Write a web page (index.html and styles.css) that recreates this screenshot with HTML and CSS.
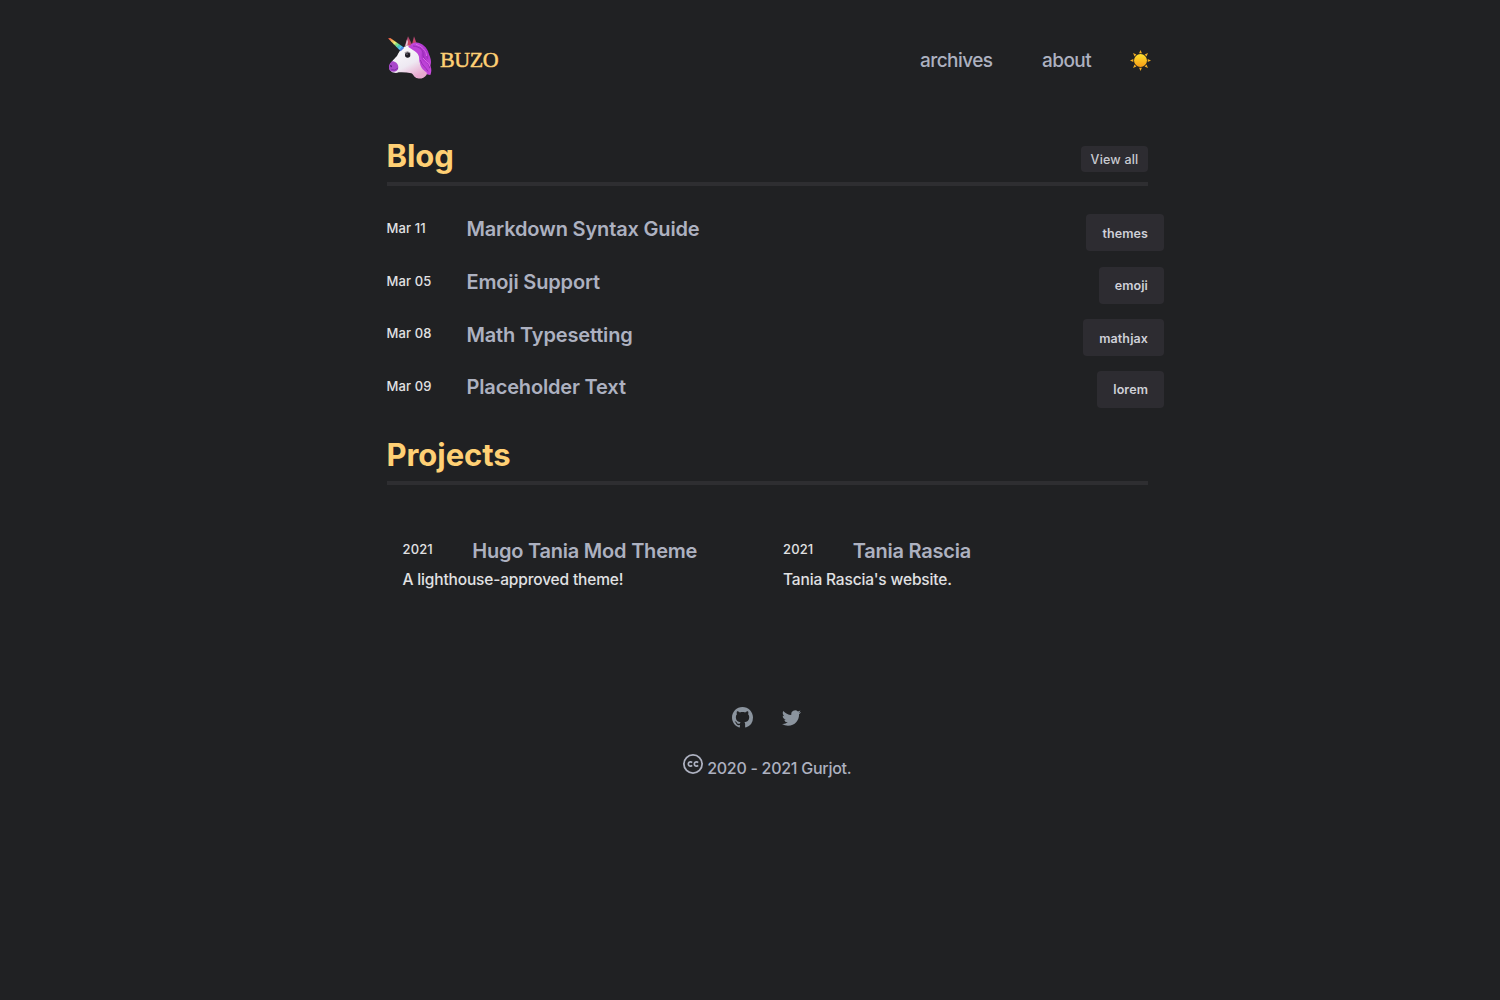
FILE: index.html
```html
<!DOCTYPE html>
<html lang="en">
<head>
<meta charset="utf-8">
<title>BUZO</title>
<link rel="stylesheet" href="styles.css">
</head>
<body>
<div class="page">
  <header class="header">
    <a class="logo">
      <svg class="unicorn" viewBox="0 0 156 150" aria-hidden="true">
        <defs>
          <linearGradient id="horn" x1="0" y1="0" x2="1" y2="1">
            <stop offset="0" stop-color="#e8474c"/><stop offset=".2" stop-color="#f3a14a"/><stop offset=".38" stop-color="#e9ec6a"/><stop offset=".55" stop-color="#58d68a"/><stop offset=".72" stop-color="#42b9e8"/><stop offset=".9" stop-color="#5360d8"/>
          </linearGradient>
          <linearGradient id="face" x1="0" y1="0" x2=".6" y2="1">
            <stop offset="0" stop-color="#ffffff"/><stop offset=".65" stop-color="#eee9f2"/><stop offset="1" stop-color="#e8a9cf"/>
          </linearGradient>
          <linearGradient id="mane" x1="0" y1="0" x2="1" y2="1">
            <stop offset="0" stop-color="#c44be0"/><stop offset=".5" stop-color="#ac34cc"/><stop offset="1" stop-color="#cd4ce0"/>
          </linearGradient>
        </defs>
        <path d="M62 42 L72 13 L84 37 L90 13 L101 42Z" fill="#a9486f"/>
        <path d="M64 42 L69 22 L76 40Z" fill="#e0cdd9"/><path d="M70 40 L74 19 L81 41Z" fill="#cf4468"/>
        <path d="M86 38 L91 17 L96 42Z" fill="#cf4468"/>
        <path d="M80 38 C100 20 130 42 134 64 C139 78 144 88 139 101 C144 112 142 121 139 129 C119 128 105 110 99 85Z" fill="url(#mane)"/>
        <path d="M57 47 C70 37 91 40 99 56 C106 70 107 82 115 94 C122 105 131 114 128 128 C121 137 110 142 101 139 C89 137 90 128 82 124 C70 121 56 120 44 121 C32 126 16 119 16 107 C17 93 29 83 39 72 C44 61 49 53 57 47Z" fill="url(#face)"/>
        <path d="M24 88 C35 88 43 96 43 107 C42 120 27 122 18 116 C12 106 15 95 24 88Z" fill="#a947cb"/>
        <path d="M18 99 q7-1 6 6 q-6 2-6-6" fill="#581e7b"/><path d="M22 113 Q33 118 42 108" fill="none" stroke="#7f2fa6" stroke-width="3"/>
        <path d="M72 44 C83 34 104 39 112 54 C116 65 107 77 119 88 C130 98 138 111 136 126 C123 121 108 106 108 94 C103 82 109 72 98 62 C91 56 84 51 72 44Z" fill="#bd43d7"/>
        <path d="M87 42 C110 44 120 57 117 71 C122 84 134 90 137 109 M106 43 C122 52 130 67 130 80 M109 84 C114 101 125 105 132 118" fill="none" stroke="#9a2db5" stroke-width="3"/>
        <path d="M96 37 C114 43 127 57 128 72 M117 78 C125 88 135 91 138 103" fill="none" stroke="#dd68ea" stroke-width="3"/>
        <path d="M12 19 L19 18 L61 47 L50 58Z" fill="url(#horn)"/>
        <path d="M25 24 L22 29 M34 30 L29 37 M43 36 L37 44 M52 42 L46 51" stroke="#fff" stroke-opacity=".4" stroke-width="2"/>
        <ellipse cx="71" cy="69" rx="8" ry="8" fill="#201c25"/><circle cx="69" cy="66" r="1.7" fill="#d7d3dd"/>
        <path d="M62 62 Q71 55 80 64" fill="none" stroke="#80747e" stroke-width="2"/>
      </svg>
      <span class="brand">BUZO</span>
    </a>
    <nav class="nav">
      <a class="nav-archives">archives</a>
      <a class="nav-about">about</a>
      <svg class="sun" viewBox="0 0 60 60" aria-hidden="true">
        <defs><linearGradient id="sunfill" x1="0" y1="0" x2="0" y2="1"><stop offset="0" stop-color="#ffe12e"/><stop offset="1" stop-color="#f79c16"/></linearGradient></defs>
        <g fill="#efab24"><path d="M30 0 L34 9.500 H26Z"/><path d="M30 0 L34 9.500 H26Z" transform="rotate(45 30 30)"/><path d="M30 0 L34 9.500 H26Z" transform="rotate(90 30 30)"/><path d="M30 0 L34 9.500 H26Z" transform="rotate(135 30 30)"/><path d="M30 0 L34 9.500 H26Z" transform="rotate(180 30 30)"/><path d="M30 0 L34 9.500 H26Z" transform="rotate(225 30 30)"/><path d="M30 0 L34 9.500 H26Z" transform="rotate(270 30 30)"/><path d="M30 0 L34 9.500 H26Z" transform="rotate(315 30 30)"/></g>
        <circle cx="30" cy="30" r="18.5" fill="url(#sunfill)"/>
      </svg>
    </nav>
  </header>

  <main>
    <section class="blog">
      <div class="section-head">
        <h2>Blog</h2>
        <a class="view-all">View all</a>
      </div>
      <div class="posts">
        <article class="post"><time>Mar 11</time><h3>Markdown Syntax Guide</h3><a class="tag tag-themes">themes</a></article>
        <article class="post"><time>Mar 05</time><h3>Emoji Support</h3><a class="tag tag-emoji">emoji</a></article>
        <article class="post"><time>Mar 08</time><h3 class="lower">Math Typesetting</h3><a class="tag tag-mathjax">mathjax</a></article>
        <article class="post"><time class="lower">Mar 09</time><h3 class="lower">Placeholder Text</h3><a class="tag tag-lorem">lorem</a></article>
      </div>
    </section>
    <section>
      <div class="section-head"><h2>Projects</h2></div>
      <div class="projects">
        <article class="project"><div class="project-head"><time>2021</time><h3>Hugo Tania Mod Theme</h3></div><p>A lighthouse-approved theme!</p></article>
        <article class="project"><div class="project-head"><time>2021</time><h3>Tania Rascia</h3></div><p>Tania Rascia's website.</p></article>
      </div>
    </section>
  </main>

  <footer class="footer">
    <div class="social">
      <svg class="github" viewBox="0 0 16 16" aria-hidden="true"><path d="M8 0C3.58 0 0 3.58 0 8c0 3.54 2.29 6.53 5.47 7.59.4.07.55-.17.55-.38 0-.19-.01-.82-.01-1.49-2.01.37-2.53-.49-2.69-.94-.09-.23-.48-.94-.82-1.13-.28-.15-.68-.52-.01-.53.63-.01 1.08.58 1.23.82.72 1.21 1.87.87 2.33.66.07-.52.28-.87.51-1.07-1.78-.2-3.64-.89-3.64-3.95 0-.87.31-1.59.82-2.15-.08-.2-.36-1.02.08-2.12 0 0 .67-.21 2.2.82.64-.18 1.32-.27 2-.27s1.36.09 2 .27c1.53-1.04 2.2-.82 2.2-.82.44 1.1.16 1.92.08 2.12.51.56.82 1.27.82 2.15 0 3.07-1.87 3.75-3.65 3.95.29.25.54.73.54 1.48 0 1.07-.01 1.93-.01 2.2 0 .21.15.46.55.38A8.01 8.01 0 0 0 16 8c0-4.42-3.58-8-8-8z"/></svg>
      <svg class="twitter" viewBox="0 2 24 20" aria-hidden="true"><path d="M23.95 4.57a10 10 0 0 1-2.82.77 4.96 4.96 0 0 0 2.16-2.72c-.95.55-2 .95-3.13 1.18a4.92 4.92 0 0 0-8.38 4.48C7.69 8.09 4.07 6.13 1.64 3.16a4.82 4.82 0 0 0-.67 2.48c0 1.71.87 3.21 2.19 4.1a4.9 4.9 0 0 1-2.23-.62v.06a4.92 4.92 0 0 0 3.95 4.83 5 5 0 0 1-2.21.08 4.94 4.94 0 0 0 4.6 3.42A9.87 9.87 0 0 1 0 19.54a13.99 13.99 0 0 0 7.55 2.21c9.05 0 14-7.5 14-13.98 0-.21 0-.42-.02-.63a9.94 9.94 0 0 0 2.46-2.55z"/></svg>
    </div>
    <div class="copyright">
      <svg class="cc" viewBox="0 0 20 20" aria-hidden="true"><circle cx="10" cy="10" r="9.1" stroke-width="1.8"/><path d="M9.100 8.600A2.150 2.150 0 1 0 9.100 11.400M15.100 8.600a2.150 2.150 0 1 0 0 2.800" stroke-width="1.7"/></svg>
      <span>2020 - 2021 Gurjot.</span>
    </div>
  </footer>
</div>
</body>
</html>
```
FILE: styles.css
```css
* { box-sizing: border-box; }
body { margin: 0; padding-left: 35px; min-height: 1000px; background: #202123; color: #e1e1e3; font-family: Inter, "Open Sans", sans-serif; }
h2, h3, p { margin: 0; }
svg { display: block; flex: none; }
.page { width: 761px; margin: 0 auto; }
.header { height: 120px; display: flex; align-items: center; justify-content: space-between; }
.logo { display: flex; align-items: center; margin-left: -3px; }
.unicorn { width: 52px; height: 50px; margin-bottom: 6px; }
.brand { margin-left: 4px; color: #ffd074; font: 22px/30px "Liberation Serif", serif; letter-spacing: -.45px; -webkit-text-stroke: .5px #ffd074; }
.nav { display: flex; align-items: center; margin-right: -2.5px; color: #adb1c0; font-size: 19px; line-height: 30px; font-weight: 450; letter-spacing: -.55px; }
.nav a { padding-top: 2px; }
.nav-archives { width: 122px; }
.nav-about { width: 87.5px; }
.sun { width: 21px; height: 21px; }
.section-head { height: 66px; display: flex; justify-content: space-between; align-items: flex-start; padding-top: 16px; border-bottom: 4px solid #2e2e31; }
.section-head h2 { margin-left: -.5px; color: #ffd074; font-size: 31px; line-height: 39px; font-weight: 700; letter-spacing: -.05px; }
.view-all { margin-top: 10px; width: 67px; height: 26px; border-radius: 4px; background: #2d2c31; color: #c9cbd2; font-size: 12.5px; line-height: 28px; font-weight: 450; text-align: center; letter-spacing: .2px; }
.posts { padding-top: 28.3px; }
.post { height: 52.35px; display: flex; align-items: flex-start; }
time { width: 80px; margin-left: -.5px; font-size: 13px; line-height: 28.4px; font-weight: 500; letter-spacing: .1px; }
h3 { color: #adb1c0; font-size: 20px; line-height: 30.6px; font-weight: 600; letter-spacing: -.16px; }
.lower { padding-top: 1px; }
.tag { height: 37px; margin-left: auto; margin-right: -16px; padding: 0 16px 0 15px; border-radius: 4px; background: #2d2c31; color: #d0d1d8; font-size: 12.5px; line-height: 39px; font-weight: 600; text-align: right; white-space: nowrap; letter-spacing: .1px; }
.tag-themes { width: 78px; }
.tag-emoji { width: 65px; line-height: 37.5px; }
.tag-mathjax { width: 81px; }
.tag-lorem { width: 67px; line-height: 37.5px; }
.blog { height: 299px; }
.projects { display: flex; padding-top: 51px; }
.project { width: 380.5px; padding-left: 16px; }
.project-head { display: flex; height: 30px; }
.project h3 { line-height: 30px; letter-spacing: -.22px; }
.project time { width: 69.7px; line-height: 27px; letter-spacing: .15px; }
.project p { margin-left: -.5px; padding-top: 1px; height: 26px; font-size: 15.5px; line-height: 26px; font-weight: 500; letter-spacing: -.16px; }
.footer { padding-top: 115px; }
.social { display: flex; align-items: center; padding-left: 345px; fill: #8b949e; }
.github { width: 21px; height: 21px; }
.twitter { width: 19px; height: 16px; margin-left: 29px; }
.copyright { display: flex; align-items: flex-start; padding: 26px 0 0 296px; color: #adb1c0; font-size: 16px; line-height: 28px; font-weight: 450; letter-spacing: -.27px; }
.copyright span { margin-left: 4.2px; }
.cc { width: 20px; height: 20px; fill: none; stroke: #adb1c0; }
```
